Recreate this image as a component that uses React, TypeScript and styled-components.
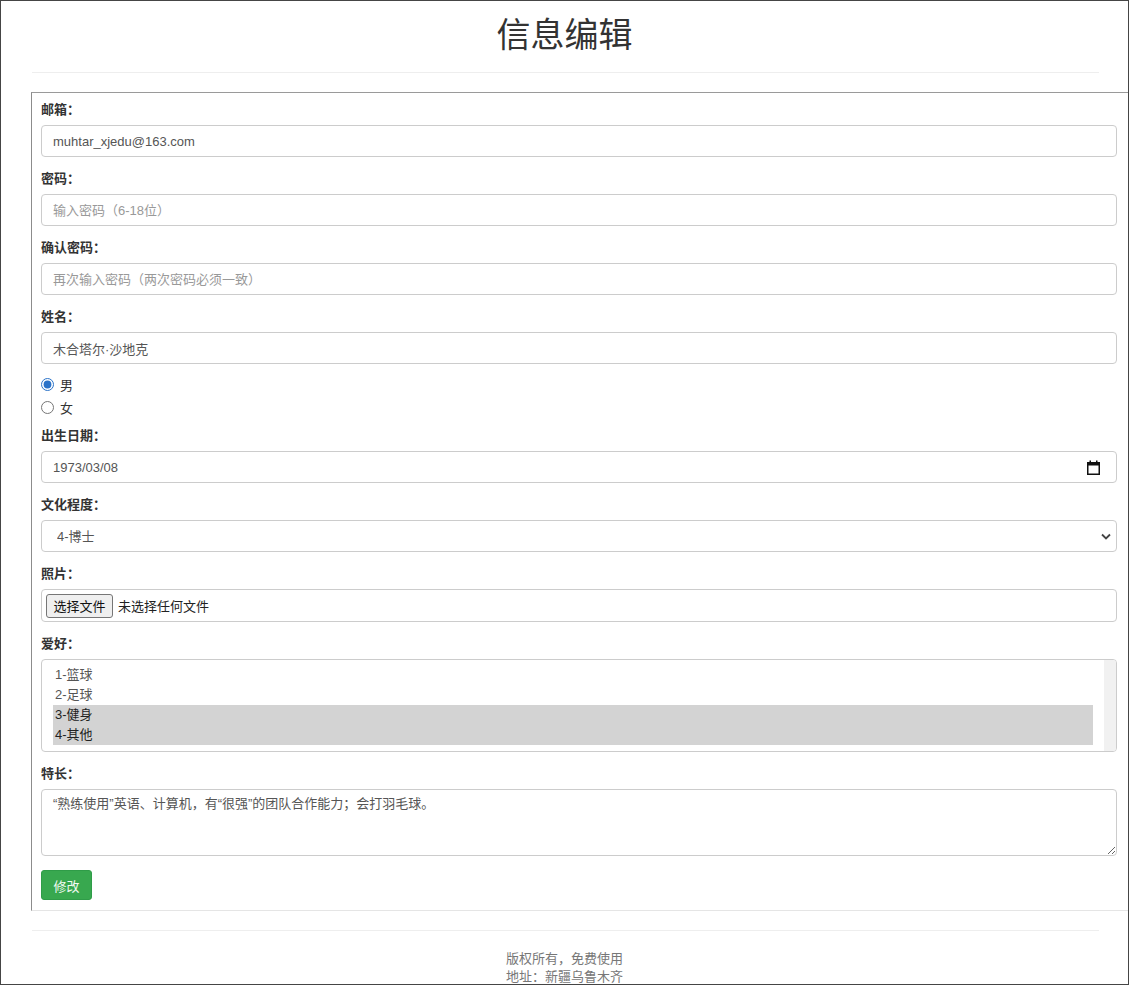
import React from "react";
import styled, { createGlobalStyle } from "styled-components";

const GlobalStyle = createGlobalStyle`
  html, body {
    margin: 0;
    padding: 0;
    background: #fff;
  }
  body {
    font-family: "Liberation Sans", "Noto Sans CJK SC", sans-serif;
    font-size: 13px;
    color: #333;
  }
  * {
    box-sizing: border-box;
  }
`;

const Frame = styled.div`
  width: 1129px;
  height: 985px;
  border: 1px solid #454545;
  overflow: hidden;
`;

const Title = styled.h1`
  margin: 14px 0 0;
  text-align: center;
  font-size: 34px;
  line-height: 40px;
  font-weight: 400;
  color: #333;
`;

const Rule = styled.hr<{ $top?: number }>`
  margin: ${(p) => (p.$top ?? 19)}px 0 19px 31px;
  width: 1067px;
  height: 0;
  border: 0;
  border-top: 1px solid #eee;
`;

const FormBox = styled.form`
  margin-left: 30px;
  padding: 7px 11px 10px 9px;
  border-top: 1px solid #9a9a9a;
  border-left: 1px solid #8c8c8c;
  border-bottom: 1px solid #e5e5e5;
`;

const Field = styled.div<{ $gap?: number }>`
  margin-bottom: ${(p) => (p.$gap ?? 12)}px;
`;

const Label = styled.label`
  display: block;
  margin-bottom: 5px;
  line-height: 20px;
  font-weight: bold;
  color: #333;
`;

const TextInput = styled.input`
  display: block;
  width: 100%;
  height: 32px;
  padding: 0 11px;
  border: 1px solid #ccc;
  border-radius: 4px;
  font: inherit;
  color: #555;
  outline: none;

  &::placeholder {
    color: #999;
  }
`;

const RadioGroup = styled.div`
  display: flex;
  flex-direction: column;
  gap: 3px;
  margin-bottom: 9px;
`;

const RadioRow = styled.label`
  display: flex;
  align-items: center;
  gap: 6px;
  height: 20px;
  color: #333;

  input {
    margin: 0;
    width: 13px;
    height: 13px;
    accent-color: #2a72c8;
  }
`;

const DateBox = styled.div`
  display: flex;
  align-items: center;
  justify-content: space-between;
  height: 32px;
  padding: 0 16px 0 11px;
  border: 1px solid #ccc;
  border-radius: 4px;
  color: #555;
`;

const SelectWrap = styled.div`
  position: relative;
`;

const Select = styled.select`
  display: block;
  width: 100%;
  height: 32px;
  padding: 0 30px 0 15px;
  border: 1px solid #ccc;
  border-radius: 4px;
  background: #fff;
  appearance: none;
  font: inherit;
  color: #555;
  outline: none;
`;

const Chevron = styled.svg`
  position: absolute;
  right: 6px;
  top: 13px;
  pointer-events: none;
`;

const FileBox = styled.div`
  display: flex;
  align-items: center;
  gap: 5px;
  height: 33px;
  padding: 0 4px;
  border: 1px solid #ccc;
  border-radius: 4px;
  color: #222;
`;

const FileButton = styled.button`
  width: 67px;
  height: 24px;
  padding: 0;
  border: 1px solid #767676;
  border-radius: 3px;
  background: #efefef;
  font: inherit;
  color: #111;
`;

const ListBox = styled.div`
  display: flex;
  height: 93px;
  border: 1px solid #ccc;
  border-radius: 4px;
  overflow: hidden;
`;

const OptionList = styled.div`
  flex: 1;
  padding: 5px 11px 0;
`;

const Option = styled.div<{ $selected?: boolean }>`
  height: 20px;
  line-height: 20px;
  padding-left: 2px;
  color: ${(p) => (p.$selected ? "#222" : "#555")};
  background: ${(p) => (p.$selected ? "#d3d3d3" : "transparent")};
`;

const ScrollTrack = styled.div`
  width: 12px;
  background: #f1f1f1;
`;

const TextArea = styled.textarea`
  display: block;
  width: 100%;
  height: 67px;
  padding: 4px 11px;
  border: 1px solid #ccc;
  border-radius: 4px;
  font: inherit;
  line-height: 19px;
  color: #555;
  outline: none;
`;

const SubmitButton = styled.button`
  display: block;
  width: 51px;
  height: 30px;
  margin-top: 14px;
  padding: 0;
  border: 1px solid #2f9c48;
  border-radius: 3px;
  background: #38a84f;
  font: inherit;
  color: #f2faf3;
`;

const Footer = styled.footer`
  margin-top: 18px;
  text-align: center;
  line-height: 18px;
  color: #777;
`;

const hobbies = [
  { name: "1-篮球", on: false },
  { name: "2-足球", on: false },
  { name: "3-健身", on: true },
  { name: "4-其他", on: true },
];

function CalendarIcon() {
  return (
    <svg width="13" height="15" viewBox="0 0 13 15">
      <rect x="0.75" y="2.75" width="11.5" height="11.5" fill="none" stroke="#111" strokeWidth="1.5" />
      <rect x="0" y="2" width="13" height="3.5" fill="#111" />
      <rect x="2.5" y="0.5" width="1.5" height="2" fill="#111" />
      <rect x="9" y="0.5" width="1.5" height="2" fill="#111" />
    </svg>
  );
}

export default function App() {
  return (
    <Frame>
      <GlobalStyle />
      <Title>信息编辑</Title>
      <Rule $top={17} />
      <FormBox onSubmit={(e) => e.preventDefault()}>
        <Field>
          <Label>邮箱：</Label>
          <TextInput type="email" defaultValue="muhtar_xjedu@163.com" />
        </Field>
        <Field>
          <Label>密码：</Label>
          <TextInput type="password" placeholder="输入密码（6-18位）" />
        </Field>
        <Field>
          <Label>确认密码：</Label>
          <TextInput type="password" placeholder="再次输入密码（两次密码必须一致）" />
        </Field>
        <Field $gap={10}>
          <Label>姓名：</Label>
          <TextInput type="text" defaultValue="木合塔尔·沙地克" />
        </Field>
        <RadioGroup>
          <RadioRow>
            <input type="radio" name="sex" defaultChecked />男
          </RadioRow>
          <RadioRow>
            <input type="radio" name="sex" />女
          </RadioRow>
        </RadioGroup>
        <Field>
          <Label>出生日期：</Label>
          <DateBox>
            <span>1973/03/08</span>
            <CalendarIcon />
          </DateBox>
        </Field>
        <Field>
          <Label>文化程度：</Label>
          <SelectWrap>
            <Select defaultValue="4">
              <option value="1">1-专科</option>
              <option value="2">2-本科</option>
              <option value="3">3-硕士</option>
              <option value="4">4-博士</option>
            </Select>
            <Chevron width="10" height="7" viewBox="0 0 10 7">
              <polyline points="1,1.5 5,5.5 9,1.5" fill="none" stroke="#444" strokeWidth="1.8" />
            </Chevron>
          </SelectWrap>
        </Field>
        <Field>
          <Label>照片：</Label>
          <FileBox>
            <FileButton type="button">选择文件</FileButton>
            <span>未选择任何文件</span>
          </FileBox>
        </Field>
        <Field>
          <Label>爱好：</Label>
          <ListBox>
            <OptionList>
              {hobbies.map((h) => (
                <Option key={h.name} $selected={h.on}>
                  {h.name}
                </Option>
              ))}
            </OptionList>
            <ScrollTrack />
          </ListBox>
        </Field>
        <div>
          <Label>特长：</Label>
          <TextArea defaultValue="“熟练使用”英语、计算机，有“很强”的团队合作能力；会打羽毛球。" />
        </div>
        <SubmitButton type="submit">修改</SubmitButton>
      </FormBox>
      <Rule />
      <Footer>
        <div>版权所有，免费使用</div>
        <div>地址：新疆乌鲁木齐</div>
      </Footer>
    </Frame>
  );
}
